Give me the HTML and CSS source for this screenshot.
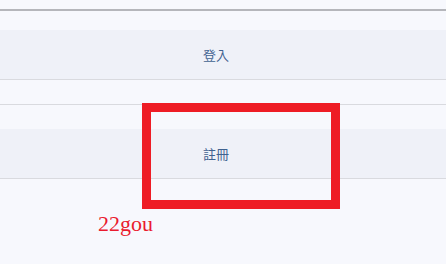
FILE: index.html
```html
<!DOCTYPE html>
<html lang="zh-TW">
<head>
    <meta charset="UTF-8">
    <meta name="viewport" content="width=device-width, initial-scale=1.0">
    <title>登入</title>
    <link rel="stylesheet" href="styles.css">
</head>
<body>
    <div class="page">
        <div class="top-bar"></div>
        <div class="spacer"></div>
        <a class="menu-btn" href="#">登入</a>
        <div class="spacer-sm"></div>
        <div class="divider"></div>
        <div class="spacer-sm"></div>
        <a class="menu-btn" href="#">註冊</a>
        <div class="brand">22gou</div>

        <!-- 標記框 -->
        <div class="highlight"></div>
    </div>
</body>
</html>
```

FILE: styles.css
```css
:root {
    --bg-color: #f7f8fd;
    --btn-color: #eff1f8;
    --line-color: #d9dadf;
    --text-color: #3f6290;
    --mark-color: #ee1c25;
}

html, body {
    margin: 0;
    padding: 0;
    background-color: var(--bg-color);
}

body {
    font-family: 'Noto Sans CJK TC', 'Noto Sans', sans-serif;
}

.page {
    position: relative;
    width: 446px;
    height: 264px;
    overflow: hidden;
}

.top-bar {
    height: 9px;
    border-bottom: 2px solid #b5b6bb;
}

.spacer {
    height: 19px;
}

.spacer-sm {
    height: 24px;
}

.divider {
    height: 1px;
    background-color: var(--line-color);
}

.menu-btn {
    display: flex;
    justify-content: center;
    align-items: center;
    height: 49px;
    padding-right: 14px;
    background-color: var(--btn-color);
    border-bottom: 1px solid var(--line-color);
    color: var(--text-color);
    font-size: 13px;
    text-decoration: none;
}

.brand {
    margin: 34px 0 0 98px;
    font-family: 'Liberation Serif', serif;
    font-size: 22px;
    line-height: 22px;
    color: #ea1b2e;
}

.highlight {
    position: absolute;
    left: 142px;
    top: 103px;
    width: 180px;
    height: 88px;
    border: 9px solid var(--mark-color);
}
```
